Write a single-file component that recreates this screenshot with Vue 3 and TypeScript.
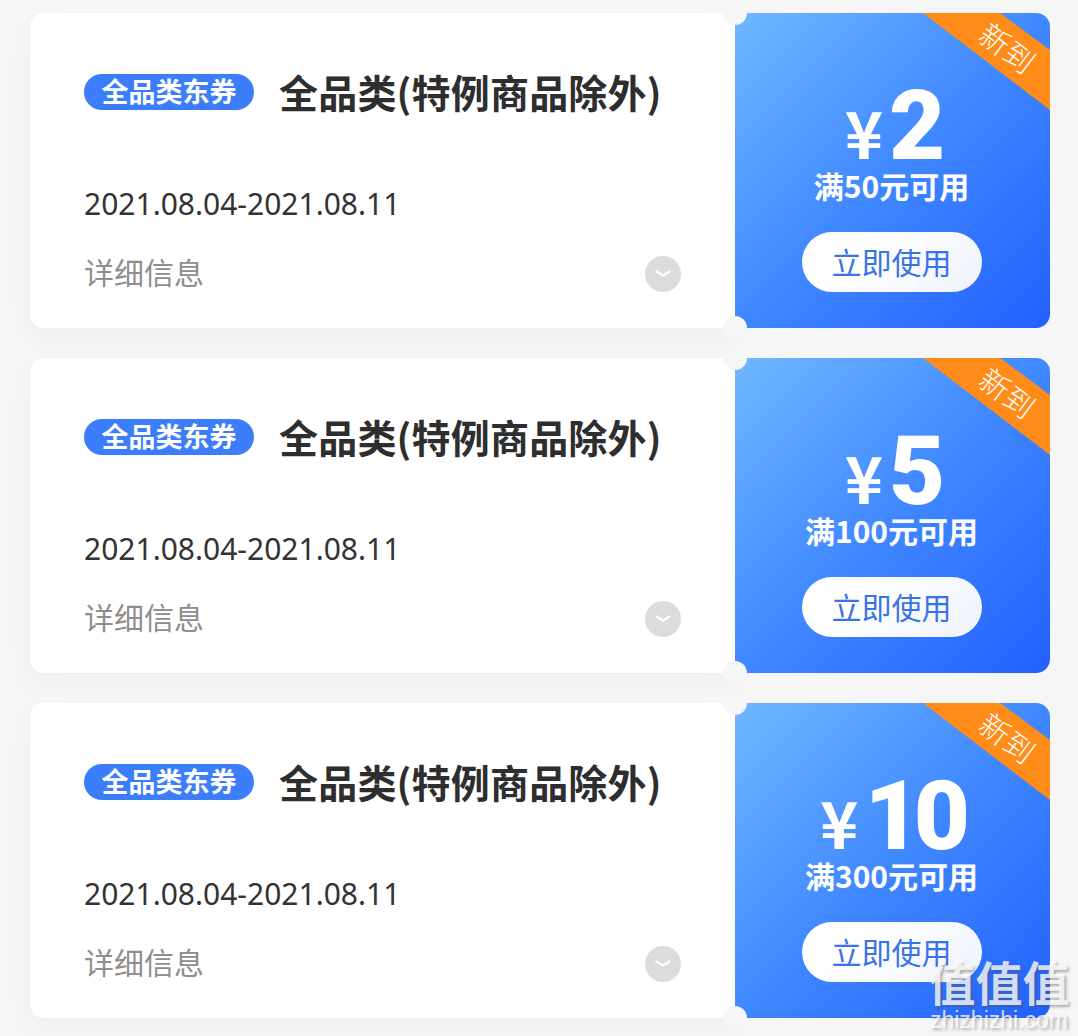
<script setup lang="ts">
interface Coupon {
  id: number
  amount: number
  limit: string
}

const coupons: Coupon[] = [
  { id: 1, amount: 2, limit: '满50元可用' },
  { id: 2, amount: 5, limit: '满100元可用' },
  { id: 3, amount: 10, limit: '满300元可用' },
]
</script>

<template>
  <div class="page">
    <div v-for="item in coupons" :key="item.id" class="coupon">
      <div class="coupon-left">
        <div class="title-row">
          <span class="tag">全品类东券</span>
          <span class="title">全品类(特例商品除外)</span>
        </div>
        <div class="date">2021.08.04-2021.08.11</div>
        <div class="detail-row">
          <span class="detail">详细信息</span>
          <span class="arrow">
            <svg width="18" height="10" viewBox="0 0 18 10">
              <path d="M2.5 2.5 L9 6.5 L15.5 2.5" fill="none" stroke="#fff" stroke-width="2.4" stroke-linecap="round" stroke-linejoin="round" />
            </svg>
          </span>
        </div>
      </div>
      <div class="coupon-right">
        <div class="ribbon"></div>
        <div class="ribbon-text">新到</div>
        <div class="price"><span class="yen">¥</span><span class="amount">{{ item.amount }}</span></div>
        <div class="limit">{{ item.limit }}</div>
        <button class="use-btn">立即使用</button>
      </div>
      <i class="notch notch-top"></i>
      <i class="notch notch-bottom"></i>
    </div>

    <!-- 水印 -->
    <div class="watermark">
      <div class="wm-main">值值值</div>
      <div class="wm-sub">zhizhizhi.com</div>
    </div>
  </div>
</template>

<style>
html,
body {
  margin: 0;
  background: #f6f6f6;
}
</style>

<style scoped>
.page {
  position: relative;
  height: 1036px;
  box-sizing: border-box;
  overflow: hidden;
  padding: 13px 28px 0 30px;
  display: flex;
  flex-direction: column;
  gap: 30px;
  background: #f6f6f6;
  font-family: 'Noto Sans CJK SC', 'Noto Sans', sans-serif;
}

.coupon {
  position: relative;
  display: flex;
  height: 315px;
  flex-shrink: 0;
}

.coupon-left {
  width: 705px;
  box-sizing: border-box;
  padding: 58px 54px 0 54px;
  background: #fff;
  border-radius: 14px 0 0 14px;
  box-shadow: 0 10px 24px rgba(0, 0, 0, 0.035);
}

.title-row {
  display: flex;
  align-items: center;
  height: 40px;
}

.tag {
  width: 170px;
  height: 36px;
  margin-right: 26px;
  margin-top: 1px;
  border-radius: 18px;
  background: #3c7dfb;
  color: #fff;
  font-size: 27px;
  font-weight: 700;
  line-height: 33px;
  text-align: center;
}

.title {
  margin-left: -1px;
  color: #2e2e2e;
  font-size: 39px;
  font-weight: 700;
  letter-spacing: 0.2px;
  line-height: 40px;
  white-space: nowrap;
}

.date {
  margin-top: 72px;
  color: #333;
  font-family: 'Noto Sans', 'Noto Sans CJK SC', sans-serif;
  font-size: 30px;
  line-height: 42px;
  white-space: nowrap;
}

.detail-row {
  display: flex;
  justify-content: space-between;
  align-items: center;
  margin-top: 25px;
}

.detail {
  color: #8e8e8e;
  font-size: 30px;
  line-height: 40px;
}

.arrow {
  display: flex;
  align-items: center;
  justify-content: center;
  width: 36px;
  height: 36px;
  margin-top: 6px;
  border-radius: 50%;
  background: #dcdcdc;
}

.coupon-right {
  position: relative;
  width: 315px;
  box-sizing: border-box;
  padding-right: 2px;
  display: flex;
  flex-direction: column;
  align-items: center;
  border-radius: 0 14px 14px 0;
  background: linear-gradient(135deg, #70b8ff 0%, #4088ff 50%, #2260ff 100%);
  color: #fff;
}

.ribbon {
  position: absolute;
  top: 0;
  right: 0;
  width: 127px;
  height: 97px;
  background: #ff8c19;
  clip-path: polygon(0 0, 77px 0, 100% 37px, 100% 100%);
}

.ribbon-text {
  position: absolute;
  top: 16px;
  right: 12px;
  color: #fff;
  font-size: 30px;
  font-weight: 300;
  line-height: 36px;
  transform: rotate(37deg);
}

.price {
  display: flex;
  align-items: baseline;
  height: 80px;
  margin-top: 73px;
}

.yen {
  font-size: 65px;
  font-weight: 700;
  line-height: 60px;
}

.amount {
  font-family: Roboto, 'Liberation Sans', sans-serif;
  margin-left: 6px;
  font-size: 97px;
  font-weight: 900;
  letter-spacing: -7px;
  line-height: 80px;
}

.limit {
  margin-top: 4px;
  font-size: 30px;
  font-weight: 700;
  line-height: 30px;
  white-space: nowrap;
}

.use-btn {
  width: 180px;
  height: 60px;
  margin-top: 32px;
  padding: 0 0 2px;
  border: none;
  border-radius: 30px;
  background: linear-gradient(135deg, #fff 30%, #eef3fb 100%);
  color: #3a72e8;
  font-family: inherit;
  font-size: 30px;
}

.notch {
  position: absolute;
  left: 693px;
  width: 24px;
  height: 24px;
  border-radius: 50%;
  background: #f6f6f6;
}

.notch-top {
  top: -12px;
}

.notch-bottom {
  bottom: -12px;
}

.watermark {
  position: absolute;
  right: 8px;
  bottom: 4px;
  width: 142px;
  color: rgba(255, 255, 255, 0.78);
  text-align: center;
  text-shadow: 2px 2px 3px rgba(80, 80, 80, 0.45);
}

.wm-main {
  font-size: 47px;
  font-weight: 700;
  line-height: 50px;
  margin-bottom: 2px;
  white-space: nowrap;
}

.wm-sub {
  font-family: 'Liberation Sans', sans-serif;
  font-size: 23px;
  line-height: 24px;
  white-space: nowrap;
}
</style>
